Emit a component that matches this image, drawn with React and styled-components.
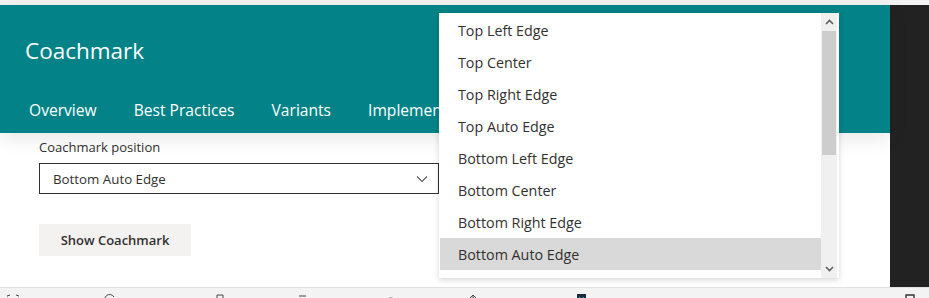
import React from 'react';
import styled, { createGlobalStyle } from 'styled-components';

// colours taken from the screenshot
const teal = '#038387';
const text = '#323130';

const GlobalStyle = createGlobalStyle`
  html, body {
    margin: 0;
    padding: 0;
    background: #f3f3f3;
  }
  body {
    font-family: "Open Sans", "Noto Sans", sans-serif;
  }
`;

const Frame = styled.div`
  position: relative;
  width: 929px;
  height: 298px;
  overflow: hidden;
  background: #f3f3f3;
  display: flex;
  flex-direction: column;
`;
const TopStrip = styled.div`
  height: 5px;
  flex: none;
  background: #f3f3f3;
`;
const MainRow = styled.div`
  display: flex;
  height: 282px;
  flex: none;
`;
const Page = styled.div`
  flex: 1;
  display: flex;
  flex-direction: column;
  background: #fff;
`;
const SidePanel = styled.div`
  width: 39px;
  flex: none;
  background: #222222;
`;
const Header = styled.header`
  height: 128px;
  flex: none;
  background: ${teal};
  color: #fff;
  box-shadow: 0 6px 18px rgba(0, 0, 0, 0.09);
  position: relative;
  z-index: 1;
  display: flex;
  flex-direction: column;
`;
const Title = styled.h1`
  margin: 0;
  padding: 28px 0 0 25px;
  font-size: 22.5px;
  font-weight: 400;
  line-height: 36px;
`;
const Nav = styled.nav`
  display: flex;
  gap: 37px;
  padding: 29px 0 0 29px;
`;
const NavItem = styled.span`
  font-size: 15.6px;
  line-height: 24px;
  white-space: nowrap;
`;
const Content = styled.div`
  flex: 1;
  padding: 5px 0 0 39px;
`;
const Label = styled.div`
  font-size: 13px;
  line-height: 19px;
  color: ${text};
  margin-bottom: 6px;
`;
const Select = styled.div`
  box-sizing: border-box;
  width: 400px;
  height: 31px;
  border: 1px solid ${text};
  display: flex;
  align-items: center;
  justify-content: space-between;
  padding: 0 10px 0 13px;
  font-size: 13.3px;
  color: ${text};
`;
const Button = styled.button`
  margin-top: 30px;
  height: 32px;
  width: 152px;
  border: none;
  background: #f3f2f1;
  color: ${text};
  font-family: inherit;
  font-size: 13px;
  font-weight: 600;
  padding: 0;
`;
const Taskbar = styled.div`
  flex: 1;
  border-top: 1px solid #e1e1e1;
  background: #f3f3f3;
  display: flex;
  align-items: flex-start;
  overflow: hidden;
`;
const TrayIcon = styled.div`
  flex: none;
  margin-left: ${(p) => p.$gap}px;
  margin-top: 6px;
  display: flex;
`;
const List = styled.ul`
  position: absolute;
  left: 439px;
  top: 13px;
  width: 400px;
  height: 265px;
  margin: 0;
  padding: 0;
  list-style: none;
  background: #fff;
  box-shadow: 0 2px 6px rgba(0, 0, 0, 0.16);
  display: flex;
  z-index: 2;
`;
const Options = styled.div`
  flex: 1;
  padding-top: 1px;
`;
const Option = styled.li`
  height: 32px;
  display: flex;
  align-items: center;
  padding-left: 18px;
  margin-left: 1px;
  font-size: 14.3px;
  color: ${text};
  background: ${(p) => (p.$selected ? '#d9d9d9' : 'transparent')};
`;
const Scrollbar = styled.div`
  width: 16px;
  margin: 0 2px 0 0;
  background: #f0f0f0;
  display: flex;
  flex-direction: column;
  align-items: stretch;
`;
const ScrollArrow = styled.div`
  height: 18px;
  display: flex;
  align-items: center;
  justify-content: center;
`;
const Thumb = styled.div`
  height: 124px;
  background: #cdcdcd;
  margin: 0 1px;
`;
const Track = styled.div`
  flex: 1;
`;

const Chevron = () => (
  <svg width="12" height="8" viewBox="0 0 12 8">
    <path d="M1 1.5 L6 6.5 L11 1.5" fill="none" stroke="#605e5c" strokeWidth="1.1" />
  </svg>
);

const Arrow = ({ up }) => (
  <svg width="9" height="6" viewBox="0 0 9 6">
    <path
      d={up ? 'M1 5 L4.5 1.5 L8 5' : 'M1 1 L4.5 4.5 L8 1'}
      fill="none"
      stroke="#606060"
      strokeWidth="1.6"
    />
  </svg>
);

// only the tops of the taskbar icons show at the bottom edge
const trayIcons = [
  { gap: 7, d: 'M3 9 A4 4 0 0 1 3 1 M9 1 A4 4 0 0 1 9 9', w: 12 },
  { gap: 85, d: 'M10 3 A5 5 0 1 0 10 8', w: 12 },
  { gap: 100, d: 'M1 1 H7 V10 H1 Z', w: 8 },
  { gap: 74, d: 'M1 2 H8', w: 9 },
  { gap: 78, d: 'M1 9 A5 5 0 0 1 11 9', w: 12 },
  { gap: 72, d: 'M4 1 V9 M1 4 L4 1 L7 4', w: 8 },
];

const navItems = ['Overview', 'Best Practices', 'Variants', 'Implementation'];
const positions = [
  'Top Left Edge',
  'Top Center',
  'Top Right Edge',
  'Top Auto Edge',
  'Bottom Left Edge',
  'Bottom Center',
  'Bottom Right Edge',
  'Bottom Auto Edge',
];

export default function App() {
  const selected = 'Bottom Auto Edge';
  return (
    <Frame>
      <GlobalStyle />
      <TopStrip />
      <MainRow>
        <Page>
          <Header>
            <Title>Coachmark</Title>
            <Nav>
              {navItems.map((n) => (
                <NavItem key={n}>{n}</NavItem>
              ))}
            </Nav>
          </Header>
          <Content>
            <Label>Coachmark position</Label>
            <Select>
              <span>{selected}</span>
              <Chevron />
            </Select>
            <Button>Show Coachmark</Button>
          </Content>
        </Page>
        <SidePanel />
      </MainRow>
      <Taskbar>
        {trayIcons.map((t, i) => (
          <TrayIcon key={i} $gap={t.gap}>
            <svg width={t.w} height="10" viewBox={`0 0 ${t.w} 10`}>
              <path d={t.d} fill="none" stroke="#444" strokeWidth="1" />
            </svg>
          </TrayIcon>
        ))}
        <TrayIcon $gap={100}>
          <svg width="9" height="10" viewBox="0 0 9 10">
            <rect width="9" height="10" fill="#1b2a3a" />
            <path d="M2 3 L4.5 5 L7 3" fill="none" stroke="#3fa9d8" strokeWidth="1" />
          </svg>
        </TrayIcon>
        <TrayIcon $gap={319}>
          <svg width="10" height="10" viewBox="0 0 10 10">
            <path d="M1 10 V1 H9 V10" fill="none" stroke="#333" strokeWidth="1.4" />
          </svg>
        </TrayIcon>
      </Taskbar>
      <List>
        <Options>
          {positions.map((p) => (
            <Option key={p} $selected={p === selected}>
              {p}
            </Option>
          ))}
        </Options>
        <Scrollbar>
          <ScrollArrow>
            <Arrow up />
          </ScrollArrow>
          <Thumb />
          <Track />
          <ScrollArrow>
            <Arrow />
          </ScrollArrow>
        </Scrollbar>
      </List>
    </Frame>
  );
}
